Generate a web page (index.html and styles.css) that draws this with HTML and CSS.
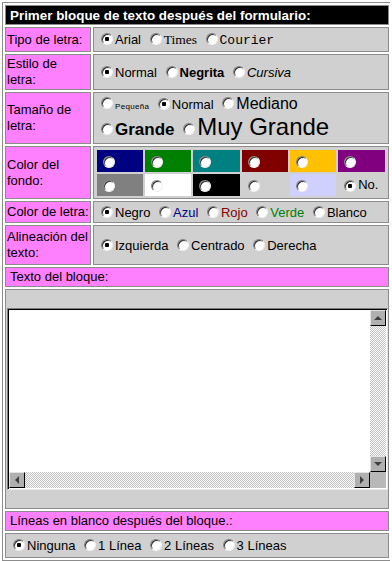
FILE: index.html
```html
<!DOCTYPE html>
<html lang="es">
<head>
  <meta charset="UTF-8" />
  <title>Bloque de texto</title>
  <link rel="stylesheet" href="styles.css">
</head>
<body>

  <form>
  <table class="form">
    <tr class="h-head">
      <td class="head" colspan="2">Primer bloque de texto después del formulario:</td>
    </tr>

    <tr class="h-tipo">
      <td class="lbl">Tipo de letra:</td>
      <td class="val">
        <label class="opt"><input type="radio" name="font" checked>Arial</label>
        <label class="opt f-times"><input type="radio" name="font">Times</label>
        <label class="opt f-courier"><input type="radio" name="font">Courier</label>
      </td>
    </tr>

    <tr class="h-estilo">
      <td class="lbl">Estilo de letra:</td>
      <td class="val">
        <label class="opt"><input type="radio" name="style" checked>Normal</label>
        <label class="opt bold"><input type="radio" name="style">Negrita</label>
        <label class="opt italic"><input type="radio" name="style">Cursiva</label>
      </td>
    </tr>

    <tr class="h-tam">
      <td class="lbl">Tamaño de letra:</td>
      <td class="val sizes">
        <div class="size-line">
          <label class="opt s-small"><input type="radio" name="size">Pequeña</label>
          <label class="opt"><input type="radio" name="size" checked>Normal</label>
          <label class="opt s-mid"><input type="radio" name="size">Mediano</label>
        </div>
        <div class="size-line">
          <label class="opt s-big"><input type="radio" name="size">Grande</label>
          <label class="opt s-huge"><input type="radio" name="size">Muy Grande</label>
        </div>
      </td>
    </tr>

    <tr class="h-fondo">
      <td class="lbl">Color del fondo:</td>
      <td class="val tight">
        <table class="swatches">
          <tr>
            <td class="sw sw-navy"><input type="radio" name="bg"></td>
            <td class="sw sw-green"><input type="radio" name="bg"></td>
            <td class="sw sw-teal"><input type="radio" name="bg"></td>
            <td class="sw sw-maroon"><input type="radio" name="bg"></td>
            <td class="sw sw-gold"><input type="radio" name="bg"></td>
            <td class="sw sw-purple"><input type="radio" name="bg"></td>
          </tr>
          <tr>
            <td class="sw sw-gray"><input type="radio" name="bg"></td>
            <td class="sw sw-white"><input type="radio" name="bg"></td>
            <td class="sw sw-black"><input type="radio" name="bg"></td>
            <td class="sw"><input type="radio" name="bg"></td>
            <td class="sw sw-lavender"><input type="radio" name="bg"></td>
            <td class="sw"><label class="opt"><input type="radio" name="bg" checked>No.</label></td>
          </tr>
        </table>
      </td>
    </tr>

    <tr class="h-letra">
      <td class="lbl nowrap">Color de letra:</td>
      <td class="val">
        <label class="opt"><input type="radio" name="color" checked>Negro</label>
        <label class="opt c-blue"><input type="radio" name="color">Azul</label>
        <label class="opt c-red"><input type="radio" name="color">Rojo</label>
        <label class="opt c-green"><input type="radio" name="color">Verde</label>
        <label class="opt"><input type="radio" name="color">Blanco</label>
      </td>
    </tr>

    <tr class="h-alin">
      <td class="lbl">Alineación del texto:</td>
      <td class="val">
        <label class="opt"><input type="radio" name="align" checked>Izquierda</label>
        <label class="opt"><input type="radio" name="align">Centrado</label>
        <label class="opt"><input type="radio" name="align">Derecha</label>
      </td>
    </tr>

    <tr class="h-texto">
      <td class="lbl wide" colspan="2">Texto del bloque:</td>
    </tr>

    <tr class="h-memo">
      <td class="val memo-cell" colspan="2">
        <div class="memo">
          <textarea class="memo-text" name="texto"></textarea>
          <div class="vbar">
            <span class="sb-btn up"></span>
            <span class="track"></span>
            <span class="sb-btn down"></span>
          </div>
          <div class="hbar">
            <span class="sb-btn left"></span>
            <span class="track"></span>
            <span class="sb-btn right"></span>
          </div>
          <div class="corner"></div>
        </div>
      </td>
    </tr>

    <tr class="h-lineas">
      <td class="lbl wide" colspan="2">Líneas en blanco después del bloque.:</td>
    </tr>

    <tr class="h-opts">
      <td class="val" colspan="2">
        <label class="opt"><input type="radio" name="lines" checked>Ninguna</label>
        <label class="opt"><input type="radio" name="lines">1 Línea</label>
        <label class="opt"><input type="radio" name="lines">2 Líneas</label>
        <label class="opt"><input type="radio" name="lines">3 Líneas</label>
      </td>
    </tr>
  </table>
  </form>

</body>
</html>
```

FILE: styles.css
```css
body {
  margin: 2px;
  font-family: "Liberation Sans", Arial, sans-serif;
  font-size: 13px;
  color: #000;
  background: #fff;
}

form {
  margin: 0;
}

/* === Tabla principal === */
.form {
  width: 388px;
  border: 1px solid #8c8c8c;
  border-spacing: 2px;
}

.form > tbody > tr > td {
  border: 1px solid #8c8c8c;
  padding: 1px;
  vertical-align: middle;
}

.h-head { height: 20px; }
.h-tipo { height: 25px; }
.h-estilo { height: 35px; }
.h-tam { height: 52px; }
.h-fondo { height: 53px; }
.h-letra { height: 22px; }
.h-alin { height: 40px; }
.h-texto { height: 19px; }
.h-memo { height: 220px; }
.h-lineas { height: 19px; }
.h-opts { height: 25px; }

.form > tbody > tr > td.head {
  background: #000;
  color: #fff;
  font-weight: bold;
  font-size: 13.4px;
  padding: 0 4px;
}

.form > tbody > tr > td.lbl {
  background: #ff80ff;
  width: 82px;
  line-height: 16px;
}

.form > tbody > tr > td.wide {
  padding-left: 4px;
}

.nowrap {
  white-space: nowrap;
}

.form > tbody > tr > td.val {
  background: #d0d0d0;
  padding-left: 2px;
}

.form > tbody > tr > td.tight {
  padding: 0 1px;
}

/* === Radios al estilo antiguo === */
.opt {
  white-space: nowrap;
}

input[type="radio"] {
  appearance: none;
  -webkit-appearance: none;
  box-sizing: border-box;
  width: 12px;
  height: 12px;
  margin: 0 2px 0 5px;
  border: 1px solid;
  border-color: #808080 #f0f0f0 #f0f0f0 #808080;
  border-radius: 50%;
  background: #fff;
  box-shadow: inset 1px 1px 0 #303030;
  vertical-align: -1px;
}

input[type="radio"]:checked {
  background: radial-gradient(circle, #000 0 2px, #fff 2.5px);
}

.f-times { font-family: "Liberation Serif", "Times New Roman", serif; font-size: 13.5px; }
.f-courier { font-family: "Liberation Mono", "Courier New", monospace; }
.bold { font-weight: bold; }
.italic { font-style: italic; }

.size-line {
  white-space: nowrap;
}

.s-small { font-size: 8px; letter-spacing: 0.3px; }
.s-mid { font-size: 16px; }
.s-big { font-size: 17px; font-weight: bold; }
.s-huge { font-size: 24px; }

.s-small input,
.s-mid input,
.s-big input,
.s-huge input {
  vertical-align: 0;
}

.c-blue { color: #000080; }
.c-red { color: #800000; }
.c-green { color: #008000; }

/* === Colores de fondo === */
.swatches {
  width: 100%;
  border-spacing: 2px;
}

.sw {
  height: 22px;
  width: 46px;
  padding: 0 0 0 1px;
  border: none;
}

.sw input[type="radio"] {
  vertical-align: middle;
}

.sw-navy { background: #000080; }
.sw-green { background: #008000; }
.sw-teal { background: #008080; }
.sw-maroon { background: #800000; }
.sw-gold { background: #ffc000; }
.sw-purple { background: #800080; }
.sw-gray { background: #808080; }
.sw-white { background: #fff; }
.sw-black { background: #000; }
.sw-lavender { background: #d0d0ff; }

/* === Area de texto con barras de desplazamiento === */
.form > tbody > tr > td.memo-cell {
  padding: 18px 0 18px 1px;
}

.memo {
  display: grid;
  grid-template-columns: minmax(0, 1fr) 16px;
  grid-template-rows: minmax(0, 1fr) 16px;
  width: 381px;
  height: 182px;
  box-sizing: border-box;
  padding: 1px;
  border: 1px solid;
  border-color: #808080 #e8e8e8 #e8e8e8 #808080;
  box-shadow: inset 1px 1px 0 #000;
  background: #fff;
}

.memo-text {
  width: 100%;
  height: 100%;
  box-sizing: border-box;
  border: 0;
  margin: 0;
  padding: 2px;
  resize: none;
  overflow: hidden;
  outline: none;
  font-family: "Liberation Mono", monospace;
  font-size: 13px;
}

.vbar {
  display: flex;
  flex-direction: column;
}

.hbar {
  display: flex;
}

.track {
  flex: 1;
  background: repeating-conic-gradient(#c0c0c0 0 25%, #fff 0 50%) 0 0 / 2px 2px;
}

.corner {
  background: #b8b8b8;
}

.sb-btn {
  display: flex;
  align-items: center;
  justify-content: center;
  width: 16px;
  height: 16px;
  box-sizing: border-box;
  background: #b0b0b0;
  border: 1px solid;
  border-color: #e4e4e4 #000 #000 #e4e4e4;
}

.sb-btn::before {
  content: "";
  width: 0;
  height: 0;
  border: 4px solid transparent;
}

.up::before {
  border-top: 0;
  border-bottom-color: #404040;
}

.down::before {
  border-bottom: 0;
  border-top-color: #404040;
}

.left::before {
  border-left: 0;
  border-right-color: #404040;
}

.right::before {
  border-right: 0;
  border-left-color: #404040;
}
```
